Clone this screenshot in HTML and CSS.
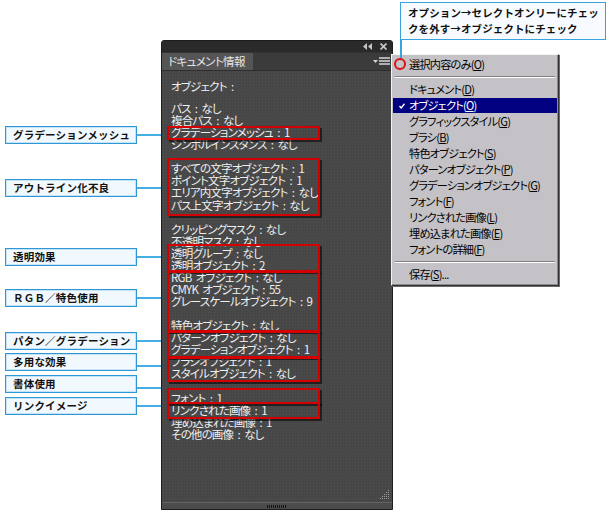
FILE: index.html
```html
<!DOCTYPE html>
<html lang="ja">
<head>
    <meta charset="UTF-8">
    <meta name="viewport" content="width=device-width, initial-scale=1.0">
    <title>ドキュメント情報</title>
    <link rel="stylesheet" href="styles.css">
</head>
<body>
    <div class="page">
        <div class="notes">
            <div class="note"><span class="note-box">グラデーションメッシュ</span><span class="note-line"></span></div>
            <div class="note"><span class="note-box">アウトライン化不良</span><span class="note-line"></span></div>
            <div class="note"><span class="note-box">透明効果</span><span class="note-line"></span></div>
            <div class="note"><span class="note-box">ＲＧＢ／特色使用</span><span class="note-line"></span></div>
            <div class="note"><span class="note-box">パタン／グラデーション</span><span class="note-line"></span></div>
            <div class="note low"><span class="note-box">多用な効果</span><span class="note-line"></span></div>
            <div class="note low"><span class="note-box">書体使用</span><span class="note-line"></span></div>
            <div class="note"><span class="note-box">リンクイメージ</span><span class="note-line"></span></div>
        </div>

        <div class="panel">
            <div class="panel-titlebar">
                <svg class="title-btn" width="9" height="7" viewBox="0 0 9 7">
                    <path d="M4 0 L0 3.5 L4 7 Z M9 0 L5 3.5 L9 7 Z" fill="#c4c4c4"/>
                </svg>
                <svg class="title-btn" width="7" height="7" viewBox="0 0 7 7">
                    <path d="M0.5 0.5 L6.5 6.5 M6.5 0.5 L0.5 6.5" stroke="#c4c4c4" stroke-width="1.8"/>
                </svg>
            </div>
            <div class="panel-tabs">
                <div class="tab">ドキュメント情報</div>
                <svg class="panel-menu-btn" width="17" height="9" viewBox="0 0 17 9">
                    <path d="M0 3 L5 3 L2.5 6 Z" fill="#d6d6d6"/>
                    <path d="M6 1 H17 M6 4 H17 M6 7 H17" stroke="#d6d6d6" stroke-width="1.4"/>
                </svg>
            </div>
            <div class="panel-body">
                <p class="info-head">オブジェクト :</p>
                <p>パス : なし</p>
                <p>複合パス : なし</p>
                <p>グラデーションメッシュ : 1</p>
                <p>シンボルインスタンス : なし</p>
                <p class="blank"></p>
                <p>すべての文字オブジェクト : 1</p>
                <p>ポイント文字オブジェクト : 1</p>
                <p>エリア内文字オブジェクト : なし</p>
                <p>パス上文字オブジェクト : なし</p>
                <p class="blank"></p>
                <p>クリッピングマスク : なし</p>
                <p>不透明マスク : なし</p>
                <p>透明グループ : なし</p>
                <p>透明オブジェクト : 2</p>
                <p>RGB オブジェクト : なし</p>
                <p>CMYK オブジェクト : 55</p>
                <p>グレースケールオブジェクト : 9</p>
                <p class="blank"></p>
                <p>特色オブジェクト : なし</p>
                <p>パターンオブジェクト : なし</p>
                <p>グラデーションオブジェクト : 1</p>
                <p>ブラシオブジェクト : 1</p>
                <p>スタイルオブジェクト : なし</p>
                <p class="blank"></p>
                <p>フォント : 1</p>
                <p>リンクされた画像 : 1</p>
                <p>埋め込まれた画像 : 1</p>
                <p>その他の画像 : なし</p>

                <span class="mark mark-mesh"></span>
                <span class="mark mark-type"></span>
                <span class="mark mark-alpha"></span>
                <span class="mark mark-color"></span>
                <span class="mark mark-pattern"></span>
                <span class="mark mark-brush"></span>
                <span class="mark mark-font"></span>
                <span class="mark mark-link"></span>

                <svg class="resize-grip" width="10" height="10" viewBox="0 0 10 10">
                    <g fill="#9a9a9a">
                        <rect x="8" y="0" width="1" height="1"/>
                        <rect x="6" y="2" width="1" height="1"/><rect x="8" y="2" width="1" height="1"/>
                        <rect x="4" y="4" width="1" height="1"/><rect x="6" y="4" width="1" height="1"/><rect x="8" y="4" width="1" height="1"/>
                        <rect x="2" y="6" width="1" height="1"/><rect x="4" y="6" width="1" height="1"/><rect x="6" y="6" width="1" height="1"/><rect x="8" y="6" width="1" height="1"/>
                        <rect x="0" y="8" width="1" height="1"/><rect x="2" y="8" width="1" height="1"/><rect x="4" y="8" width="1" height="1"/><rect x="6" y="8" width="1" height="1"/><rect x="8" y="8" width="1" height="1"/>
                    </g>
                </svg>
            </div>
            <div class="panel-foot"><span class="foot-grip"></span></div>
        </div>
    </div>

    <div class="menu">
        <div class="menu-item">選択内容のみ(<u>O</u>)</div>
        <div class="menu-sep"></div>
        <div class="menu-item">ドキュメント(<u>D</u>)</div>
        <div class="menu-item is-active">
            <svg class="check" width="6" height="6" viewBox="0 0 6 6">
                <path d="M0.5 3 L2.2 5 L5.5 0.8" stroke="#fff" stroke-width="1.4" fill="none"/>
            </svg>オブジェクト(<u>O</u>)
        </div>
        <div class="menu-item">グラフィックスタイル(<u>G</u>)</div>
        <div class="menu-item">ブラシ(<u>B</u>)</div>
        <div class="menu-item">特色オブジェクト(<u>S</u>)</div>
        <div class="menu-item">パターンオブジェクト(<u>P</u>)</div>
        <div class="menu-item">グラデーションオブジェクト(<u>G</u>)</div>
        <div class="menu-item">フォント(<u>F</u>)</div>
        <div class="menu-item">リンクされた画像(<u>L</u>)</div>
        <div class="menu-item">埋め込まれた画像(<u>E</u>)</div>
        <div class="menu-item">フォントの詳細(<u>F</u>)</div>
        <div class="menu-sep"></div>
        <div class="menu-item">保存(<u>S</u>)...</div>
    </div>

    <div class="tip">オプション→セレクトオンリーにチェッ<br>クを外す→オブジェクトにチェック</div>
    <span class="tip-line"></span>
    <span class="menu-ring"></span>
</body>
</html>
```

FILE: styles.css
```css
* {
    box-sizing: border-box;
    margin: 0;
    padding: 0;
}

body {
    position: relative;
    width: 613px;
    height: 512px;
    overflow: hidden;
    background: #ffffff;
    font-family: "Noto Sans CJK JP", "Liberation Sans", sans-serif;
    color: #111;
}

.page {
    display: flex;
    align-items: flex-start;
}

/* callouts on the left */
.notes {
    flex: none;
    width: 161px;
    padding-top: 126px;
    display: flex;
    flex-direction: column;
}

.note {
    display: flex;
    align-items: center;
    height: 18px;
}

.note:nth-child(2) { margin-top: 35px; }
.note:nth-child(3) { margin-top: 51px; }
.note:nth-child(4) { margin-top: 23px; }
.note:nth-child(5) { margin-top: 25px; }
.note:nth-child(6) { margin-top: 3px; }
.note:nth-child(7) { margin-top: 4px; }
.note:nth-child(8) { margin-top: 4px; }

.note-box {
    width: 132px;
    height: 18px;
    margin-left: 5px;
    padding-left: 7px;
    border: 1px solid #2f98d4;
    box-shadow: inset 0 0 0 1px #c4e3f6;
    background: #f2f9fe;
    font-size: 10.5px;
    font-weight: bold;
    line-height: 16px;
    letter-spacing: 0.2px;
    white-space: nowrap;
}

.note-line {
    width: 24px;
    height: 2px;
    background: #45aee3;
}

.note.low .note-line {
    margin-top: 7px;
}

/* panel */
.panel {
    flex: none;
    width: 232px;
    height: 470px;
    margin-top: 40px;
    display: flex;
    flex-direction: column;
    border: 1px solid #1d1d1d;
    border-radius: 3px 3px 0 0;
    background: #474747;
}

.panel-titlebar {
    height: 11px;
    display: flex;
    justify-content: flex-end;
    align-items: center;
    gap: 8px;
    padding-right: 5px;
    background: #2a2a2a;
}

.panel-tabs {
    height: 18px;
    display: flex;
    align-items: center;
    justify-content: space-between;
    padding-right: 2px;
    background: #3b3b3b;
    border-top: 1px solid #333;
}

.tab {
    width: 91px;
    height: 100%;
    padding-left: 6px;
    background: #555555;
    color: #e4e4e4;
    font-size: 11.5px;
    line-height: 17px;
    font-feature-settings: "palt";
    letter-spacing: -0.6px;
    white-space: nowrap;
}

.panel-body {
    position: relative;
    flex: 1;
    padding: 9px 0 0 9px;
    background-color: #474747;
    background-image: radial-gradient(#505050 0.6px, transparent 0.8px);
    background-size: 3px 3px;
    border-top: 1px solid #2e2e2e;
    color: #f0f0f0;
    font-size: 11.5px;
    line-height: 12.07px;
    font-feature-settings: "palt";
    letter-spacing: -0.8px;
    word-spacing: 2.5px;
    white-space: nowrap;
}

.panel-body p {
    height: 12.07px;
}

.panel-body .info-head {
    height: 12px;
    margin-bottom: 10px;
}

.mark {
    position: absolute;
    left: 5px;
    width: 153px;
    border: 2px solid #d40000;
    box-shadow: 2px 2px 0 rgba(0, 0, 0, 0.55);
}

.mark-mesh    { top: 55px;  height: 14px; }
.mark-type    { top: 87px;  height: 58px; }
.mark-alpha   { top: 173px; height: 28px; }
.mark-color   { top: 200px; height: 61px; }
.mark-pattern { top: 260px; height: 27px; }
.mark-brush   { top: 286px; height: 25px; }
.mark-font    { top: 317px; height: 16px; }
.mark-link    { top: 331px; height: 17px; }

.resize-grip {
    position: absolute;
    right: 2px;
    bottom: 2px;
}

.panel-foot {
    height: 7px;
    display: flex;
    justify-content: center;
    align-items: center;
    background: #4c4c4c;
    border-top: 1px solid #626262;
}

.foot-grip {
    width: 20px;
    height: 3px;
    background: repeating-linear-gradient(90deg, #151515 0 1px, transparent 1px 2px);
}

/* flyout menu */
.menu {
    position: absolute;
    left: 391px;
    top: 54px;
    width: 168px;
    height: 232px;
    padding: 1px 1px;
    background: #c4c2c6;
    border-top: 1px solid #f4f4f4;
    border-left: 1px solid #f4f4f4;
    border-right: 1px solid #303030;
    border-bottom: 1px solid #303030;
    box-shadow: inset -1px -1px 0 #8a8a8a, 1px 1px 0 #6a6a6a;
    font-size: 11.2px;
    font-feature-settings: "palt";
    letter-spacing: -0.8px;
    color: #000;
}

.menu-item {
    position: relative;
    height: 16px;
    padding-left: 16px;
    line-height: 16px;
    white-space: nowrap;
}

.menu-item u {
    text-underline-offset: 1px;
}

.menu-item.is-active {
    margin-top: 1px;
    height: 15px;
    line-height: 15px;
    background: #000080;
    color: #ffffff;
}

.check {
    position: absolute;
    left: 6px;
    top: 5px;
}

.menu-sep {
    height: 9px;
    margin: 0 2px;
    background: linear-gradient(#808080, #808080) 0 4px / 100% 1px no-repeat,
                linear-gradient(#ffffff, #ffffff) 0 5px / 100% 1px no-repeat;
}

/* annotation on top */
.tip {
    position: absolute;
    left: 400px;
    top: 2px;
    width: 206px;
    height: 38px;
    padding: 2px 0 0 7px;
    border: 1px solid #3aa2dc;
    background: #f7fbff;
    font-size: 10.5px;
    font-weight: bold;
    line-height: 16px;
    letter-spacing: 0.1px;
    white-space: nowrap;
}

.tip-line {
    position: absolute;
    left: 400px;
    top: 40px;
    width: 2px;
    height: 19px;
    background: #3aa2dc;
}

.menu-ring {
    position: absolute;
    left: 394px;
    top: 58px;
    width: 12px;
    height: 12px;
    border: 2.5px solid #e01010;
    border-radius: 50%;
}
```
